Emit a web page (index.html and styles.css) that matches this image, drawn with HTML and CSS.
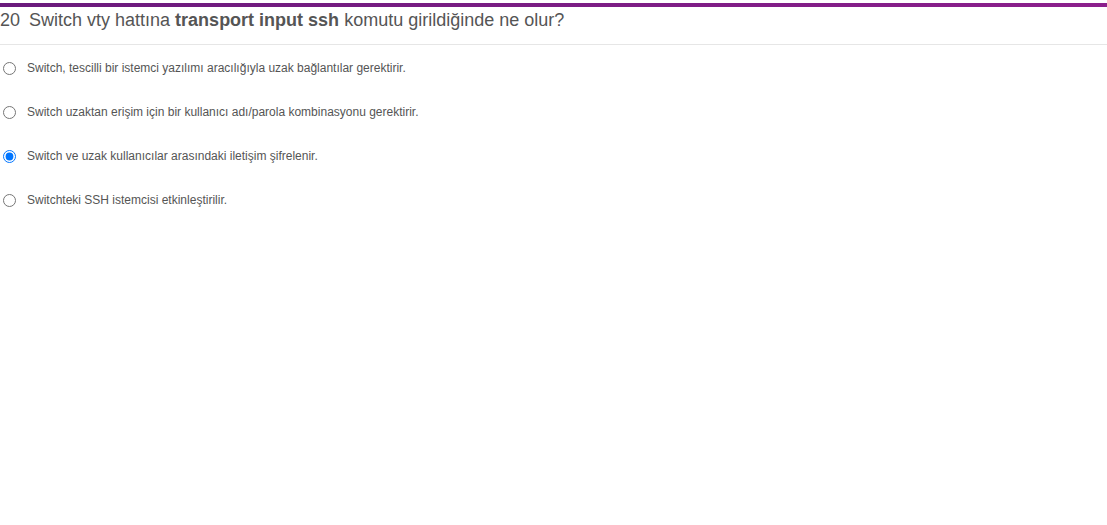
FILE: index.html
```html
<!DOCTYPE html>
<html lang="tr">
<head>
<meta charset="utf-8">
<link rel="stylesheet" href="styles.css">
</head>
<body>
<div class="topbar"></div>
<div class="question">
  <h2 class="q-title"><span class="q-num">20</span> Switch vty hattına <strong>transport input ssh</strong> komutu girildiğinde ne olur?</h2>
</div>
<form class="answers">
  <label class="answer"><input type="radio" name="a"><span>Switch, tescilli bir istemci yazılımı aracılığıyla uzak bağlantılar gerektirir.</span></label>
  <label class="answer"><input type="radio" name="a"><span>Switch uzaktan erişim için bir kullanıcı adı/parola kombinasyonu gerektirir.</span></label>
  <label class="answer"><input type="radio" name="a" checked><span>Switch ve uzak kullanıcılar arasındaki iletişim şifrelenir.</span></label>
  <label class="answer"><input type="radio" name="a"><span>Switchteki SSH istemcisi etkinleştirilir.</span></label>
</form>
</body>
</html>
```
FILE: styles.css
```css
html, body {
  margin: 0;
  padding: 0;
  background: #fff;
  font-family: "Liberation Sans", Arial, sans-serif;
  color: #555;
}
.topbar {
  margin-top: 3px;
  height: 4px;
  background: linear-gradient(to right, #6a1a7c, #8c1f8c);
}
.question {
  border-bottom: 1px solid #e6e6e6;
  height: 37px;
}
.q-title {
  margin: 0;
  padding-top: 3px;
  font-size: 18px;
  font-weight: normal;
  line-height: 21px;
  color: #555;
}
.q-num {
  margin-right: 4px;
}
.q-title strong {
  font-weight: bold;
}
.answers {
  display: flex;
  flex-direction: column;
  padding-top: 14px;
  gap: 26px;
}
.answer {
  display: flex;
  align-items: center;
  height: 18px;
  font-size: 12px;
  color: #555;
}
.answer input {
  width: 13px;
  height: 13px;
  margin: 0 11px 0 3px;
}
```
